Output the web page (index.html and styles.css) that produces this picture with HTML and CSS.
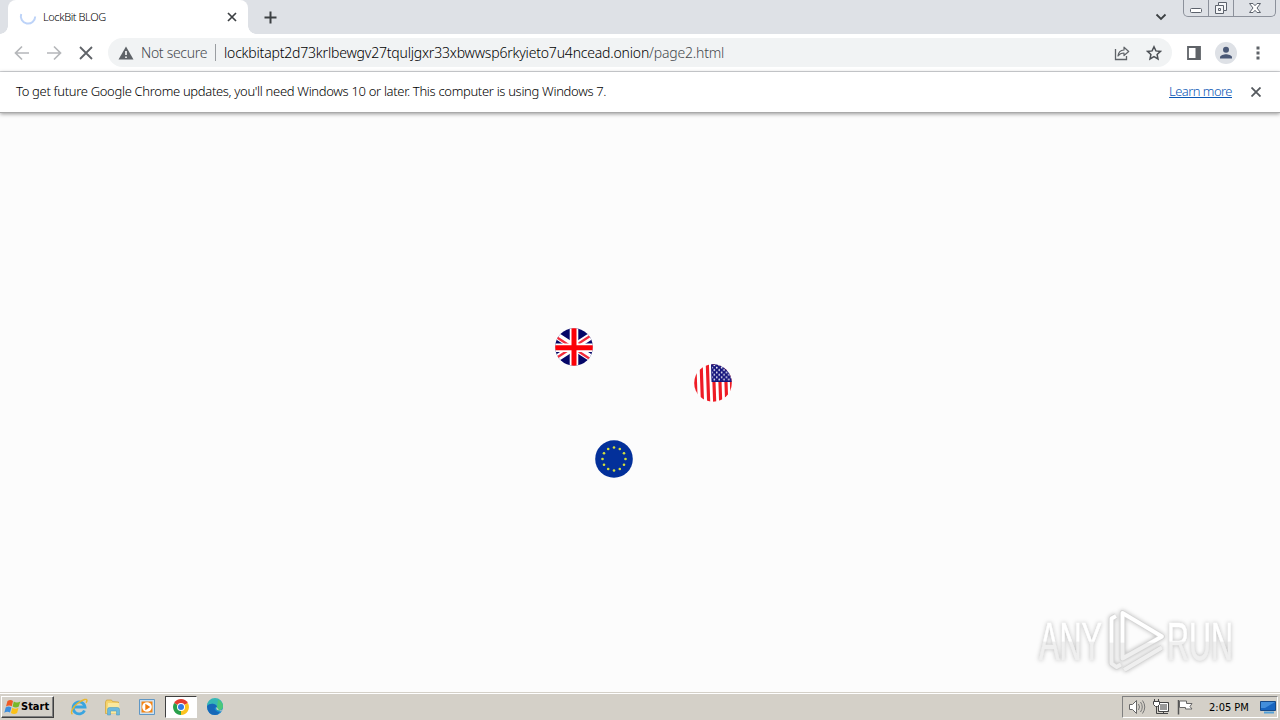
FILE: index.html
```html
<!DOCTYPE html>
<html lang="en">
<head>
  <meta charset="UTF-8">
  <title>LockBit BLOG</title>
  <link rel="stylesheet" href="styles.css">
</head>
<body>
  <header class="tabstrip">
    <div class="tab">
      <svg class="spinner" width="18" height="18" viewBox="0 0 18 18"><path d="M2.200 6A7.200 7.200 0 1 0 16.200 8.500" fill="none" stroke="#bdd3f8" stroke-width="2"/></svg>
      <span class="tab-title">LockBit BLOG</span>
      <svg width="10" height="10" viewBox="0 0 10 10"><path d="M1 1l8 8M9 1L1 9" stroke="#3c4043" stroke-width="1.7"/></svg>
    </div>
    <svg class="new-tab" width="13" height="13" viewBox="0 0 13 13"><path d="M6.5 .5v12M.5 6.5h12" stroke="#3c4043" stroke-width="2"/></svg>
    <svg class="tab-search" width="12" height="8" viewBox="0 0 12 8"><path d="M1.5 1.500L6 6l4.500-4.500" fill="none" stroke="#3c4043" stroke-width="1.8"/></svg>
    <div class="window-buttons">
      <span class="win-btn"><svg width="14" height="7" viewBox="0 0 14 7"><rect x="1.500" y="1.500" width="11" height="4" rx="1" fill="#fff" stroke="#5c626c"/></svg></span>
      <span class="win-btn"><svg width="14" height="14" viewBox="0 0 14 14"><path d="M4.500 1.500h8v8h-3v3h-8v-8h3z" fill="#f5f6f8" stroke="#5c626c"/><path d="M4.500 4.500h5v5M4.500 7.500h2v2h-2z" fill="none" stroke="#5c626c"/></svg></span>
      <span class="win-btn wide"><svg width="14" height="12" viewBox="0 0 14 12"><path d="M1.500 1.500h3.500l2 2.200 2-2.200h3.500L9 6l3.500 4.500H9L7 8.300l-2 2.200H1.500L5 6z" fill="#fff" stroke="#5c626c"/></svg></span>
    </div>
  </header>

  <nav class="toolbar">
    <svg width="16" height="16" viewBox="0 0 16 16"><path d="M15 8H2M8 1.500L1.500 8 8 14.500" fill="none" stroke="#b5b7ba" stroke-width="1.700"/></svg>
    <svg width="16" height="16" viewBox="0 0 16 16"><path d="M1 8h13M8 1.500L14.500 8 8 14.500" fill="none" stroke="#b5b7ba" stroke-width="1.700"/></svg>
    <svg width="16" height="16" viewBox="0 0 16 16"><path d="M2 2l12 12M14 2L2 14" stroke="#5f6368" stroke-width="1.800"/></svg>
    <div class="omnibox">
      <svg width="16" height="14" viewBox="0 0 16 14"><path d="M8 .5L15.500 13.500H.5z" fill="#5f6368"/><path d="M8 5v4M8 10.500v1.500" stroke="#fff" stroke-width="1.600"/></svg>
      <span class="security">Not secure</span>
      <span class="divider"></span>
      <span class="url"><span class="host">lockbitapt2d73krlbewgv27tquljgxr33xbwwsp6rkyieto7u4ncead.onion</span><span class="path">/page2.html</span></span>
      <svg class="share" width="16" height="16" viewBox="0 0 16 16"><path d="M1.500 4v10.500h11v-3.500" fill="none" stroke="#5f6368" stroke-width="1.300"/><path d="M4 11c.4-3.800 2.500-5.800 6-6V2.200L14.700 6.500 10 10.500V8c-2.700 0-4.500.8-6 3z" fill="none" stroke="#5f6368" stroke-width="1.200" stroke-linejoin="round"/></svg>
      <svg width="16" height="16" viewBox="0 0 16 16"><path d="M8 1.800l1.900 4.100 4.600.5-3.400 3.100.9 4.500L8 11.700 4 14l.9-4.500L1.500 6.400l4.600-.5z" fill="none" stroke="#4d5156" stroke-width="1.500"/></svg>
    </div>
    <svg class="side-panel" width="14" height="14" viewBox="0 0 14 14"><path d="M1 1h12v12H1z" fill="#fff" stroke="#5f6368" stroke-width="1.800"/><path d="M8.500 1H13v12H8.500z" fill="#5f6368"/></svg>
    <svg class="avatar" width="22" height="22" viewBox="0 0 22 22"><circle cx="11" cy="11" r="11" fill="#dee1e6"/><circle cx="11" cy="7.700" r="3" fill="#4a5876"/><path d="M5 16.500v-1.300c0-2 4-3 6-3s6 1 6 3v1.300z" fill="#4a5876"/></svg>
    <svg class="more" width="4" height="16" viewBox="0 0 4 16"><path d="M.5 1.500h3v3h-3zM.5 6.500h3v3h-3zM.5 11.500h3v3h-3z" fill="#5f6368"/></svg>
  </nav>

  <div class="infobar">
    <span class="infobar-text">To get future Google Chrome updates, you'll need Windows 10 or later. This computer is using Windows 7.</span>
    <a class="learn-more" href="#">Learn more</a>
    <svg width="10" height="10" viewBox="0 0 10 10"><path d="M.5 .5l9 9M9.500 .5l-9 9" stroke="#55595e" stroke-width="1.800"/></svg>
  </div>

  <main class="page">
    <svg class="flag flag-uk" viewBox="0 0 38 38">
      <defs><clipPath id="round"><circle cx="19" cy="19" r="18.800"/></clipPath></defs>
      <g clip-path="url(#round)">
        <path d="M0 0h38v38H0z" fill="#050768"/>
        <path d="M-4 4l46 30M42 4L-4 34" stroke="#fff" stroke-width="7"/>
        <path d="M-4 5.500l23 15M42 3.500L19 18.500M-4 33.500l23-15M42 35.500L19 20.500" stroke="#f22b3c" stroke-width="2.200"/>
        <path d="M19 0v38M0 19.700h38" stroke="#fff" stroke-width="8.600"/>
        <path d="M19 0v38M0 19.700h38" stroke="#fb0007" stroke-width="5"/>
      </g>
    </svg>
    <svg class="flag flag-us" viewBox="0 0 38 38">
      <defs>
        <pattern id="stars" width="4.800" height="4.800" patternUnits="userSpaceOnUse"><circle cx="1.200" cy="1.200" r=".85" fill="#fff"/><circle cx="3.600" cy="3.600" r=".85" fill="#fff"/></pattern>
      </defs>
      <g clip-path="url(#round)">
        <path d="M0 0h38v38H0z" fill="#fff"/>
        <g transform="rotate(-2 19 19)"><path d="M1.500 0v38M7.800 0v38M14 0v38M20 0v38M26 0v38M32 0v38M37.500 0v38" stroke="#ee1c25" stroke-width="3.200"/></g>
        <path d="M17 0h21v18H17.500z" fill="#15157c"/>
        <path d="M18 1h20v16H18z" fill="url(#stars)"/>
      </g>
    </svg>
    <svg class="flag flag-eu" viewBox="0 0 38 38">
      <circle cx="19" cy="19" r="18.800" fill="#03309a"/>
      <g fill="#d3df3c">
        <circle cx="19" cy="7.500" r="1.300"/><circle cx="24.800" cy="9" r="1.300"/><circle cx="29" cy="13.200" r="1.300"/>
        <circle cx="30.500" cy="19" r="1.300"/><circle cx="29" cy="24.800" r="1.300"/><circle cx="24.800" cy="29" r="1.300"/>
        <circle cx="19" cy="30.500" r="1.300"/><circle cx="13.200" cy="29" r="1.300"/><circle cx="9" cy="24.800" r="1.300"/>
        <circle cx="7.500" cy="19" r="1.300"/><circle cx="9" cy="13.200" r="1.300"/><circle cx="13.200" cy="9" r="1.300"/>
      </g>
    </svg>
    <!-- translucent watermark, lower half slightly darker -->
    <svg class="watermark" width="204" height="64" viewBox="0 0 204 64">
      <defs><linearGradient id="fade" gradientUnits="userSpaceOnUse" x1="0" y1="0" x2="0" y2="64"><stop offset=".5" stop-color="#fff"/><stop offset=".52" stop-color="#efefef"/></linearGradient></defs>
      <g class="mark-text" fill="url(#fade)" stroke="url(#fade)" stroke-width=".6">
        <text x="1" y="51" textLength="63" lengthAdjust="spacingAndGlyphs">ANY</text>
        <text x="129" y="51" textLength="66" lengthAdjust="spacingAndGlyphs">RUN</text>
      </g>
      <g transform="translate(71 1)" fill="none" stroke-linejoin="round">
        <path d="M7 6L2.500 8.500v45l5 3.500L12 54.500M15 60l38-22.500M13.500 3v45.500L53 26.500z" stroke="#d6d6d6" stroke-width="5.500"/>
        <path d="M7 6L2.500 8.500v45l5 3.500L12 54.500M15 60l38-22.500M13.500 3v45.500L53 26.500z" stroke="url(#fade)" stroke-width="3.800"/>
      </g>
    </svg>
  </main>

  <footer class="taskbar">
    <button class="start">
      <svg width="17" height="16" viewBox="0 0 17 16"><path d="M3.500 2q3-2 5.500 0L7.800 7.200Q5 5.500 2 7.500z" fill="#ef5a24"/><path d="M9.800 2.500q3 2 6.500 0L14.800 7.500Q12 9.500 8.600 7.500z" fill="#78b82a"/><path d="M1.700 8.500q3-2 5.700 0L6 13.500Q3.500 11.700 .3 13.700z" fill="#3c8ede"/><path d="M8.300 8.800q3 2 6.200 0L13.100 14q-3 2-6.200 0z" fill="#fbc117"/></svg>
      <span>Start</span>
    </button>
    <div class="quick-launch">
      <span class="task"><svg width="18" height="18" viewBox="0 0 18 18"><path d="M14.500 12.500A6 6 0 1 1 15 9H4.500" fill="none" stroke="#3aa5e0" stroke-width="2.800"/><path d="M2.500 16C0 15 2.500 9 8 5s9-4.500 9-2.500q0 1-1 2.300" fill="none" stroke="#e9b72d" stroke-width="1.400"/></svg></span>
      <span class="task"><svg width="18" height="18" viewBox="0 0 18 18"><path d="M1.500 4l1-2h5l1 1.500 6 .5v11l-13 .5z" fill="#f5d36b" stroke="#d1a238" stroke-width=".7"/><path d="M4 5h11l1 10.500H3z" fill="#fae89e"/><path d="M3.500 17V11.500q0-2 2-2h8q2 0 2 2V17h-3v-4h-6v4z" fill="#6cb9dd" stroke="#4294bd" stroke-width=".5"/></svg></span>
      <span class="task"><svg width="18" height="18" viewBox="0 0 18 18"><path d="M1.500 1.500h15v15h-15z" fill="#cce1f2" stroke="#5f97c5"/><path d="M3.500 3.500h11v11h-11z" fill="#f58513"/><circle cx="9" cy="9" r="4.800" fill="#fff"/><path d="M7.300 5.800l5 3.200-5 3.300z" fill="#ef7a0b"/></svg></span>
      <span class="task active"><svg width="16" height="16" viewBox="0 0 16 16"><path d="M8 8L1.100 4A8 8 0 0 1 14.900 4z" fill="#e53d30"/><path d="M8 8L14.900 4A8 8 0 0 1 8 16z" fill="#fcc31e"/><path d="M8 8v8A8 8 0 0 1 1.100 4z" fill="#29a04b"/><circle cx="8" cy="8" r="4" fill="#fff"/><circle cx="8" cy="8" r="3" fill="#317be5"/></svg></span>
      <span class="task"><svg width="18" height="18" viewBox="0 0 18 18"><circle cx="9" cy="9" r="8" fill="#178cd0"/><path d="M1 8a8 8 0 0 1 16 0c0 3-2 4.500-5 4.200-2-.2-1-1.200-1-3C11 6 5 4 1 8z" fill="#36b7b5"/><path d="M12 1.800A8 8 0 0 1 17 8c0 3-2 4.500-5 4.200-2-.2-1-1.200-1-3z" fill="#4bc77a"/><path d="M10.500 9c-.8 2 .5 3.300 3 3.400q2 0 3-1l.5 .6-3 1.500z" fill="#d4d0c8"/><path d="M1 8c4-4 10-2 10 1.200-3-1-4 3.800 2.500 5.300Q12 17 9 17 1.500 17 1 8z" fill="#1668b8"/></svg></span>
    </div>
    <div class="tray">
      <svg class="sound" width="18" height="16" viewBox="0 0 18 16"><path d="M1.500 5.500h3l4-4v13l-4-4h-3z" fill="#fff" stroke="#666"/><path d="M10.500 5q2 3 0 6M12.500 3q3.500 5 0 10M14.500 1.500q4.500 6.500 0 13" fill="none" stroke="#777"/></svg>
      <svg class="network" width="17" height="16" viewBox="0 0 17 16"><path d="M5.500 3.500h10v9h-10z" fill="#999" stroke="#444"/><path d="M6.500 4.500h8v7h-8z" fill="none" stroke="#fff"/><path d="M6 14.500h9M10.500 12v2M3.500 7v7.500H6M1.500 0v3M5.500 0v3" fill="none" stroke="#444"/><path d="M.5 2.500h6v3l-2 2h-2l-2-2z" fill="#fff" stroke="#444"/></svg>
      <svg class="action" width="17" height="16" viewBox="0 0 17 16"><path d="M1.500 1v14.500" stroke="#555" stroke-width="1.500"/><path d="M2.500 2h7v2.500h5.500l-2 3 2 2.500H8.500V8.500h-6z" fill="#fff" stroke="#666"/></svg>
      <span class="clock">2:05 PM</span>
      <svg width="16" height="14" viewBox="0 0 16 14"><path d="M.5 1.500h15v9H.5z" fill="#1965c0" stroke="#174987"/><path d="M1 2h14L5 8H1z" fill="#438edb"/><path d="M4 12.500h10" stroke="#53a1d8" stroke-width="2"/></svg>
    </div>
  </footer>
</body>
</html>
```
FILE: styles.css
```css
* {
  box-sizing: border-box;
}
body {
  margin: 0;
  width: 1280px;
  height: 720px;
  display: flex;
  flex-direction: column;
  overflow: hidden;
  background: #fcfcfc;
  color: #000;
  font-family: "Noto Sans", sans-serif;
}
svg {
  display: block;
  flex: none;
}
span, a {
  white-space: nowrap;
}
.tabstrip {
  display: flex;
  align-items: center;
  height: 34px;
  padding-left: 8px;
  background: #dee1e6;
}
.tab {
  position: relative;
  display: flex;
  align-items: center;
  width: 240px;
  height: 34px;
  padding: 0 11px;
  border-radius: 8px 8px 0 0;
  background: #fff;
}
/* curved feet of the active tab */
.tab::before, .tab::after {
  content: "";
  position: absolute;
  bottom: 0;
  width: 8px;
  height: 8px;
}
.tab::before {
  left: -8px;
  background: radial-gradient(circle at 0 0, #dee1e6 7.5px, #fff 8px);
}
.tab::after {
  right: -8px;
  background: radial-gradient(circle at 100% 0, #dee1e6 7.5px, #fff 8px);
}
.tab-title {
  flex: 1;
  margin: 0 0 2px 6px;
  font-size: 11px;
  font-weight: 300;
  letter-spacing: -.42px;
}
.new-tab {
  margin-left: 15.5px;
}
.tab-search {
  margin-left: auto;
}
.window-buttons {
  display: flex;
  align-self: flex-start;
  height: 17px;
  margin: 0 4px 0 16px;
  border: 1px solid #8c919b;
  border-top: 0;
  border-radius: 0 0 5px 5px;
}
.win-btn {
  display: flex;
  align-items: center;
  justify-content: center;
  width: 25px;
  border-right: 1px solid #8c919b;
}
.win-btn:first-child svg {
  margin-top: 4px;
}
.win-btn.wide {
  width: 41px;
  border-right: 0;
}
.toolbar {
  display: flex;
  align-items: center;
  height: 38px;
  padding: 0 20px 0 14px;
  border-bottom: 1px solid #d6d8db;
  background: #fff;
}
.toolbar > svg + svg {
  margin-left: 16px;
}
.omnibox {
  display: flex;
  align-items: center;
  width: 1064px;
  height: 29px;
  margin-left: 14px;
  padding: 0 10px;
  border-radius: 15px;
  background: #f1f3f4;
  font-size: 14px;
  font-weight: 300;
}
.security {
  width: 67px;
  margin-left: 7px;
  color: #45494e;
  letter-spacing: -.3px;
}
.divider {
  width: 1px;
  height: 17px;
  margin: 0 8px 0 7px;
  background: #9a9da1;
}
.url {
  letter-spacing: -.19px;
}
.host {
  color: #000;
}
.path {
  color: #45494e;
}
.share {
  margin: 0 16px 0 auto;
}
.toolbar > .side-panel {
  margin-left: 15px;
}
.toolbar > .avatar {
  margin-left: 14px;
}
.toolbar > .more {
  margin-left: 19px;
}
.infobar {
  position: relative;
  display: flex;
  align-items: center;
  height: 41px;
  padding: 0 19px 0 16px;
  border-bottom: 1px solid #aaa;
  background: #fff;
  box-shadow: 0 1px 4px rgba(0, 0, 0, .4);
  font-size: 13px;
  font-weight: 300;
  letter-spacing: -.32px;
}
.infobar-text, .learn-more {
  padding-bottom: 2px;
}
.learn-more {
  margin: 0 19px 0 auto;
  color: #0b57b5;
  letter-spacing: -.55px;
}
.page {
  position: relative;
  flex: 1;
}
.flag {
  position: absolute;
  width: 38px;
  height: 38px;
}
.flag-uk {
  left: 555px;
  top: 215px;
}
.flag-us {
  left: 694px;
  top: 251px;
}
.flag-eu {
  left: 595px;
  top: 327px;
}
.watermark {
  position: absolute;
  right: 38px;
  bottom: 19px;
  filter: drop-shadow(0 0 2px #bbb);
}
.mark-text {
  font: 53px "Liberation Sans", sans-serif;
}
.taskbar {
  display: flex;
  align-items: center;
  height: 28px;
  padding: 2px 2px 2px 1px;
  border-top: 1px solid #d4d0c8;
  background: #d4d0c8;
  box-shadow: inset 0 1px #fff;
}
.start {
  display: flex;
  align-items: center;
  width: 53px;
  height: 22px;
  padding: 0 2px;
  border: 1px solid;
  border-color: #fff #404040 #404040 #fff;
  background: #d4d0c8;
  box-shadow: inset -1px -1px #808080;
  color: #000;
  font: bold 11px "DejaVu Sans Condensed", "DejaVu Sans", sans-serif;
}
.quick-launch {
  display: flex;
  gap: 2px;
  margin-left: 9px;
}
.task {
  display: flex;
  align-items: center;
  justify-content: center;
  width: 32px;
  height: 22px;
}
.task.active {
  border: 1px solid;
  border-color: #404040 #fff #fff #404040;
  background: #fff;
}
.tray {
  display: flex;
  align-items: center;
  width: 156px;
  height: 22px;
  margin-left: auto;
  padding: 0 1px 0 5px;
  border: 1px solid;
  border-color: #808080 #fff #fff #808080;
}
.network, .action {
  margin-left: 7px;
}
.clock {
  margin: 0 auto 0 15px;
  padding-top: 1px;
  color: #000;
  font: 11px "DejaVu Sans Condensed", "DejaVu Sans", sans-serif;
}
```
